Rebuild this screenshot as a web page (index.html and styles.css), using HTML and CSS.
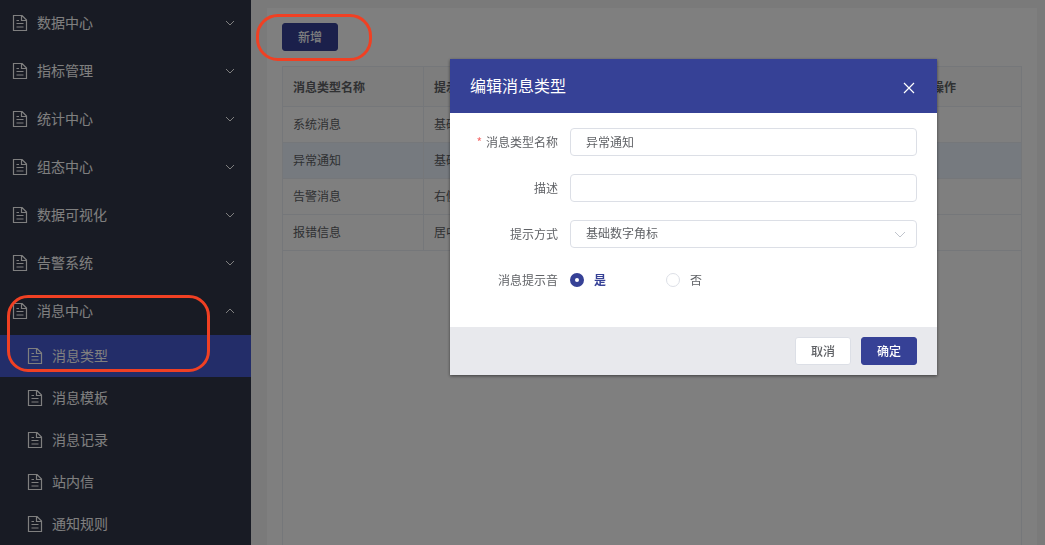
FILE: index.html
```html
<!DOCTYPE html>
<html lang="zh-CN">
<head>
<meta charset="utf-8">
<meta name="viewport" content="width=device-width, initial-scale=1">
<title>消息类型</title>
<link rel="stylesheet" href="styles.css">
</head>
<body>
<svg class="defs" aria-hidden="true">
  <symbol id="doc" viewBox="0 0 16 16"><path d="M1.5 .5H10L14.5 5V15.5H1.5ZM9.5 .5V5.5H14.5M4.5 5.5H7M4.5 8.5H11.5M4.5 12H11.5" stroke-width="1.2"/></symbol>
  <symbol id="down" viewBox="0 0 10 6"><path d="M1 1L5 5L9 1"/></symbol>
  <symbol id="up" viewBox="0 0 10 6"><path d="M1 5L5 1L9 5"/></symbol>
</svg>
<div class="app">
  <nav class="sidebar">
    <ul class="menu">
      <li><a class="item" href="#"><svg class="doc"><use href="#doc"/></svg><span>数据中心</span><svg class="arrow"><use href="#down"/></svg></a></li>
      <li><a class="item" href="#"><svg class="doc"><use href="#doc"/></svg><span>指标管理</span><svg class="arrow"><use href="#down"/></svg></a></li>
      <li><a class="item" href="#"><svg class="doc"><use href="#doc"/></svg><span>统计中心</span><svg class="arrow"><use href="#down"/></svg></a></li>
      <li><a class="item" href="#"><svg class="doc"><use href="#doc"/></svg><span>组态中心</span><svg class="arrow"><use href="#down"/></svg></a></li>
      <li><a class="item" href="#"><svg class="doc"><use href="#doc"/></svg><span>数据可视化</span><svg class="arrow"><use href="#down"/></svg></a></li>
      <li><a class="item" href="#"><svg class="doc"><use href="#doc"/></svg><span>告警系统</span><svg class="arrow"><use href="#down"/></svg></a></li>
      <li><a class="item" href="#"><svg class="doc"><use href="#doc"/></svg><span>消息中心</span><svg class="arrow"><use href="#up"/></svg></a>
        <ul class="submenu">
          <li><a class="item sub active" href="#"><svg class="doc"><use href="#doc"/></svg><span>消息类型</span></a></li>
          <li><a class="item sub" href="#"><svg class="doc"><use href="#doc"/></svg><span>消息模板</span></a></li>
          <li><a class="item sub" href="#"><svg class="doc"><use href="#doc"/></svg><span>消息记录</span></a></li>
          <li><a class="item sub" href="#"><svg class="doc"><use href="#doc"/></svg><span>站内信</span></a></li>
          <li><a class="item sub" href="#"><svg class="doc"><use href="#doc"/></svg><span>通知规则</span></a></li>
        </ul>
      </li>
    </ul>
  </nav>
  <main class="content">
    <section class="panel">
      <div class="toolbar"><button class="btn primary" type="button">新增</button></div>
      <div class="table-box">
        <table class="table">
          <colgroup><col class="col-name"><col class="col-mode"><col><col class="col-action"></colgroup>
          <thead><tr><th>消息类型名称</th><th>提示方式</th><th></th><th>操作</th></tr></thead>
          <tbody>
            <tr><td>系统消息</td><td>基础数字角标</td><td></td><td></td></tr>
            <tr class="current"><td>异常通知</td><td>基础数字角标</td><td></td><td></td></tr>
            <tr><td>告警消息</td><td>右侧弹窗</td><td></td><td></td></tr>
            <tr><td>报错信息</td><td>居中弹窗</td><td></td><td></td></tr>
          </tbody>
        </table>
      </div>
    </section>
  </main>
</div>
<div class="overlay">
  <form class="dialog" role="dialog" aria-labelledby="dialog-title">
    <header class="dialog-head">
      <h2 class="dialog-title" id="dialog-title">编辑消息类型</h2>
      <button class="close" type="button" aria-label="关闭"><svg viewBox="0 0 12 12"><path d="M1 1L11 11M11 1L1 11" stroke-width="1.2"/></svg></button>
    </header>
    <div class="dialog-body">
      <div class="row"><label class="label required" for="name">消息类型名称</label><input class="field" id="name" type="text" value="异常通知"></div>
      <div class="row"><label class="label" for="desc">描述</label><input class="field" id="desc" type="text"></div>
      <div class="row"><label class="label" for="mode">提示方式</label>
        <div class="select-box"><select class="field" id="mode"><option>基础数字角标</option></select><svg class="select-arrow" viewBox="0 0 12 8"><path d="M1 1L6 6L11 1"/></svg></div>
      </div>
      <div class="row"><span class="label" id="sound">消息提示音</span>
        <div class="radios" role="radiogroup" aria-labelledby="sound">
          <label class="choice"><input class="radio" type="radio" name="sound" checked><span>是</span></label>
          <label class="choice"><input class="radio" type="radio" name="sound"><span>否</span></label>
        </div>
      </div>
    </div>
    <footer class="dialog-foot">
      <button class="btn" type="button">取消</button>
      <button class="btn primary" type="button">确定</button>
    </footer>
  </form>
</div>
<div class="mark mark-add"></div>
<div class="mark mark-menu"></div>
</body>
</html>
```

FILE: styles.css
```css
* { box-sizing: border-box; }
body {
  margin: 0;
  height: 100vh;
  overflow: hidden;
  font-family: "Noto Sans CJK SC", "Noto Sans", sans-serif;
  font-size: 12px;
  line-height: 18px;
  color: #606266;
}
button, input, select { font: inherit; color: inherit; }
ul { list-style: none; margin: 0; padding: 0; }
svg { fill: none; stroke: currentColor; flex: none; }
.defs { position: absolute; width: 0; height: 0; }

.app { display: flex; height: 100vh; }
.sidebar { flex: none; width: 251px; background: #303648; overflow: hidden; }
.menu { margin-top: -1px; }
.item {
  display: flex;
  align-items: center;
  gap: 9px;
  height: 48px;
  padding: 0 16px 0 12px;
  font-size: 14px;
  line-height: 20px;
  color: #fff;
  text-decoration: none;
}
.item span { flex: 1; padding-bottom: 2px; }
.sub { height: 42px; padding-left: 27px; }
.active { background: #465ad2; }
.doc { width: 16px; height: 16px; }
.arrow { width: 10px; height: 6px; }

.content {
  flex: 1;
  min-width: 0;
  display: flex;
  padding: 8px 8px 0 16px;
  background: #f5f5f5;
}
.panel {
  flex: 1;
  min-width: 0;
  display: flex;
  flex-direction: column;
  gap: 15px;
  padding: 15px 15px 0;
  background: #fff;
}
.toolbar { display: flex; }
.table-box { flex: 1; border: 1px solid #ebeef5; border-bottom: 0; }
.table { width: 100%; table-layout: fixed; border-collapse: separate; border-spacing: 0; }
.col-name { width: 141px; }
.col-mode { width: 200px; }
.col-action { width: 99px; }
.table th, .table td {
  height: 36px;
  padding: 0 10px 2px;
  border-right: 1px solid #ebeef5;
  border-bottom: 1px solid #ebeef5;
  text-align: left;
  white-space: nowrap;
}
.table th { height: 40px; padding-bottom: 0; background: #fafafa; font-weight: 700; }
.table th:last-child, .table td:last-child { border-right: 0; }
.current { background: #ecf5ff; }

.btn {
  width: 56px;
  height: 28px;
  padding: 0;
  border: 1px solid #dcdfe6;
  border-radius: 3px;
  background: #fff;
  font-weight: 500;
}
.primary { border-color: #364196; background: #364196; color: #fff; }

.overlay {
  position: fixed;
  inset: 0;
  display: flex;
  align-items: flex-start;
  padding: 59px 108px 0 450px;
  background: rgba(0, 0, 0, .5);
}
.dialog { flex: 1; min-width: 0; background: #fff; box-shadow: 0 1px 3px rgba(0, 0, 0, .5); }
.dialog-head {
  display: flex;
  align-items: center;
  justify-content: space-between;
  padding: 14px 20px;
  background: #364196;
  color: #fff;
}
.dialog-title { margin: 0; padding-bottom: 2px; font-size: 16px; line-height: 24px; font-weight: 400; }
.close { display: flex; padding: 2px; border: 0; background: none; margin-top: 4px; }
.close svg { width: 12px; height: 12px; }
.dialog-body { display: flex; flex-direction: column; gap: 18px; padding: 15px 20px 33px; }
.row { display: flex; align-items: center; min-height: 28px; }
.label { flex: none; width: 100px; padding-right: 12px; text-align: right; }
.required::before { content: "*"; margin-right: 4px; color: #f56c6c; }
.field {
  flex: 1;
  min-width: 0;
  width: 100%;
  height: 28px;
  padding: 0 15px 2px;
  border: 1px solid #dcdfe6;
  border-radius: 4px;
  background: #fff;
  appearance: none;
}
.select-box { position: relative; flex: 1; display: flex; }
.select-arrow { position: absolute; right: 11px; top: 11px; width: 12px; height: 8px; color: #c0c4cc; pointer-events: none; }
.radios { display: flex; gap: 60px; }
.choice { display: flex; align-items: center; gap: 10px; }
.radio { appearance: none; width: 14px; height: 14px; margin: 0; border: 1px solid #dcdfe6; border-radius: 50%; background: #fff; }
.radio:checked { border: 5px solid #364196; }
.radio:checked + span { color: #364196; font-weight: 700; }
.dialog-foot { display: flex; justify-content: flex-end; gap: 10px; padding: 10px 20px; background: #e8e9ed; }
.dialog-head { min-height: 54px; }

.mark { position: absolute; border: 3px solid #f04023; pointer-events: none; }
.mark-add { left: 256px; top: 14px; width: 116px; height: 47px; border-radius: 22px; }
.mark-menu { left: 7px; top: 295px; width: 203px; height: 77px; border-radius: 21px; }
```
